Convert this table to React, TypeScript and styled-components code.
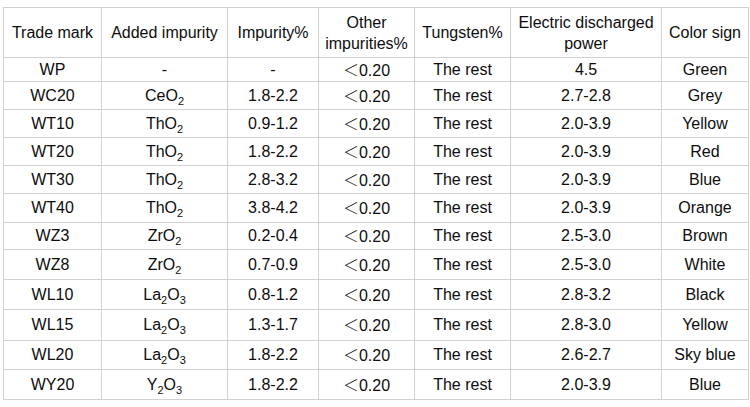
import React from 'react'
import styled, { createGlobalStyle } from 'styled-components'

const GlobalStyle = createGlobalStyle`
  html, body {
    margin: 0;
    padding: 0;
    background: #fff;
  }
  body {
    font-family: "Liberation Sans", Arial, "Noto Sans CJK SC", sans-serif;
    color: #0d0d0d;
  }
`

const Page = styled.div`
  padding: 7px 0 0 3px;
`

const Table = styled.table`
  border-collapse: collapse;
  table-layout: fixed;
  width: 745px;
  font-size: 16px;
`

const HeadCell = styled.th`
  font-weight: normal;
  border: 1px solid #d2d2d2;
  padding: 0 2px;
  height: 49px;
  line-height: 21px;
  text-align: center;
  vertical-align: middle;
`

const Row = styled.tr<{ $h: number }>`
  height: ${p => p.$h}px;
`

const Cell = styled.td`
  border: 1px solid #d2d2d2;
  padding: 0;
  line-height: 18px;
  text-align: center;
  vertical-align: middle;
  white-space: nowrap;
`

const Sub = styled.sub`
  font-size: 11px;
  line-height: 0;
  vertical-align: -4px;
`

const Lt = styled.span`
  font-family: "Noto Sans CJK SC", sans-serif;
  font-weight: 300;
`

const cols = [98, 126, 91, 96, 96, 151, 87]

type Formula = [string, string?][]

const ce: Formula = [['Ce'], ['O', '2']]
const th: Formula = [['Th'], ['O', '2']]
const zr: Formula = [['Zr'], ['O', '2']]
const la: Formula = [['La', '2'], ['O', '3']]
const y: Formula = [['Y', '2'], ['O', '3']]

type Item = {
  mark: string
  added: Formula | null
  pct: string
  power: string
  color: string
  h: number
}

const rows: Item[] = [
  { mark: 'WP', added: null, pct: '-', power: '4.5', color: 'Green', h: 24 },
  { mark: 'WC20', added: ce, pct: '1.8-2.2', power: '2.7-2.8', color: 'Grey', h: 28 },
  { mark: 'WT10', added: th, pct: '0.9-1.2', power: '2.0-3.9', color: 'Yellow', h: 28 },
  { mark: 'WT20', added: th, pct: '1.8-2.2', power: '2.0-3.9', color: 'Red', h: 28 },
  { mark: 'WT30', added: th, pct: '2.8-3.2', power: '2.0-3.9', color: 'Blue', h: 28 },
  { mark: 'WT40', added: th, pct: '3.8-4.2', power: '2.0-3.9', color: 'Orange', h: 29 },
  { mark: 'WZ3', added: zr, pct: '0.2-0.4', power: '2.5-3.0', color: 'Brown', h: 27 },
  { mark: 'WZ8', added: zr, pct: '0.7-0.9', power: '2.5-3.0', color: 'White', h: 30 },
  { mark: 'WL10', added: la, pct: '0.8-1.2', power: '2.8-3.2', color: 'Black', h: 30 },
  { mark: 'WL15', added: la, pct: '1.3-1.7', power: '2.8-3.0', color: 'Yellow', h: 31 },
  { mark: 'WL20', added: la, pct: '1.8-2.2', power: '2.6-2.7', color: 'Sky blue', h: 29 },
  { mark: 'WY20', added: y, pct: '1.8-2.2', power: '2.0-3.9', color: 'Blue', h: 30 },
]

function Chem({ f }: { f: Formula | null }) {
  if (!f) return <>-</>
  return (
    <>
      {f.map(([el, n], i) => (
        <React.Fragment key={i}>
          {el}
          {n && <Sub>{n}</Sub>}
        </React.Fragment>
      ))}
    </>
  )
}

export default function App() {
  return (
    <>
      <GlobalStyle />
      <Page>
        <Table>
          <colgroup>
            {cols.map((w, i) => (
              <col key={i} style={{ width: w }} />
            ))}
          </colgroup>
          <thead>
            <tr>
              <HeadCell>Trade mark</HeadCell>
              <HeadCell>Added impurity</HeadCell>
              <HeadCell>Impurity%</HeadCell>
              <HeadCell>Other impurities%</HeadCell>
              <HeadCell>Tungsten%</HeadCell>
              <HeadCell>Electric discharged power</HeadCell>
              <HeadCell>Color sign</HeadCell>
            </tr>
          </thead>
          <tbody>
            {rows.map(r => (
              <Row key={r.mark} $h={r.h}>
                <Cell>{r.mark}</Cell>
                <Cell>
                  <Chem f={r.added} />
                </Cell>
                <Cell>{r.pct}</Cell>
                <Cell>
                  <Lt>＜</Lt>0.20
                </Cell>
                <Cell>The rest</Cell>
                <Cell>{r.power}</Cell>
                <Cell>{r.color}</Cell>
              </Row>
            ))}
          </tbody>
        </Table>
      </Page>
    </>
  )
}
